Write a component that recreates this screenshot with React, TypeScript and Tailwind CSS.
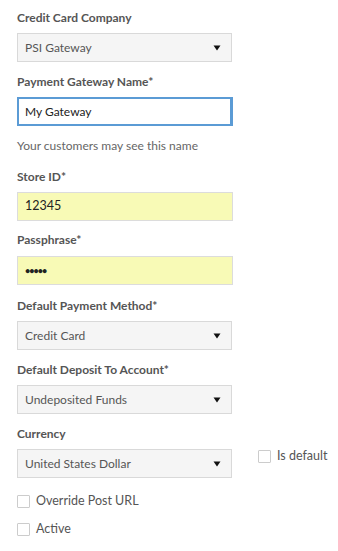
import React from "react";

const font = { fontFamily: "Lato, 'Open Sans', sans-serif" };

function Arrow() {
  return (
    <svg width="8" height="6" viewBox="0 0 8 6" className="shrink-0">
      <path d="M0.5 0.5 L7.5 0.5 L4 5.5 Z" fill="#111" />
    </svg>
  );
}

function Label({ children }: { children: React.ReactNode }) {
  return <div className="h-4 text-[12px] leading-4 font-bold text-[#555]">{children}</div>;
}

function Select({ value }: { value: string }) {
  return (
    <div className="w-[215px] h-[29px] bg-[#f5f5f5] border border-[#d9d9d9] flex items-center justify-between pl-[7px] pr-[10px] text-[12px] text-[#555]">
      <span>{value}</span>
      <Arrow />
    </div>
  );
}

function Yellow({ value, small }: { value: string; small?: boolean }) {
  return (
    <div className="w-[216px] h-[29px] bg-[#f8fab6] border border-[#dcdcdc] flex items-center pl-[7px] text-[12.5px] text-[#222]">
      <span className={small ? "text-[9px] tracking-[-1px] font-bold" : ""}>{value}</span>
    </div>
  );
}

function Check({ label }: { label: string }) {
  return (
    <div className="flex items-center gap-[6px] text-[12.5px] text-[#555] leading-4">
      <div className="w-[13px] h-[13px] border border-[#ccc] rounded-[1px] bg-white" />
      <span>{label}</span>
    </div>
  );
}

export default function App() {
  return (
    <div style={font} className="w-[338px] h-[551px] bg-white pl-[17px] pt-[10px]">
      <Label>Credit Card Company</Label>
      <div className="mt-[7px]"><Select value="PSI Gateway" /></div>

      <div className="mt-[12px]"><Label>Payment Gateway Name*</Label></div>
      <div className="mt-[7px] w-[216px] h-[29px] border-2 border-r-[3px] border-[#5b9bd5] flex items-center pl-[6px] text-[12px] text-[#222]">
        My Gateway
      </div>
      <div className="mt-[12px] h-4 leading-4 text-[12px] text-[#666]">Your customers may see this name</div>

      <div className="mt-[15px]"><Label>Store ID*</Label></div>
      <div className="mt-[7px]"><Yellow value="12345" /></div>

      <div className="mt-[11px]"><Label>Passphrase*</Label></div>
      <div className="mt-[8px]"><Yellow value="•••••" small /></div>

      <div className="mt-[13px]"><Label>Default Payment Method*</Label></div>
      <div className="mt-[7px]"><Select value="Credit Card" /></div>

      <div className="mt-[12px]"><Label>Default Deposit To Account*</Label></div>
      <div className="mt-[7px]"><Select value="Undeposited Funds" /></div>

      <div className="mt-[12px]"><Label>Currency</Label></div>
      <div className="mt-[7px] flex items-start">
        <Select value="United States Dollar" />
        <div className="ml-[26px] mt-[-1px]"><Check label="Is default" /></div>
      </div>

      <div className="mt-[15px]"><Check label="Override Post URL" /></div>
      <div className="mt-[12px]"><Check label="Active" /></div>
    </div>
  );
}
